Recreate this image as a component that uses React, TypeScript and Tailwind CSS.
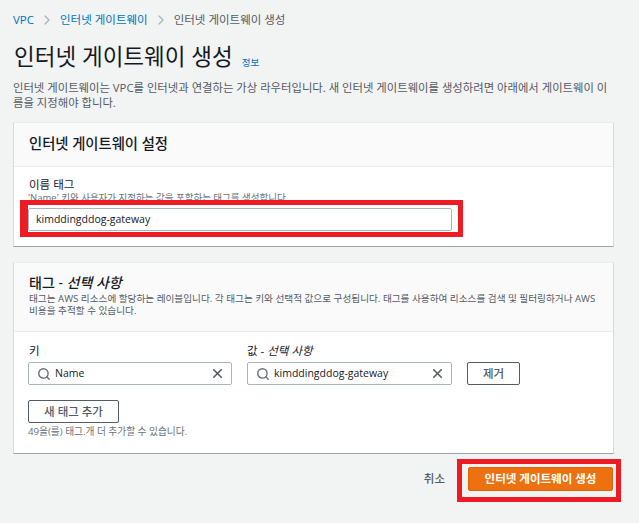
import React from "react";
import { Search, X, ChevronRight } from "lucide-react";

const font = "font-['Open_Sans','Noto_Sans_CJK_KR',sans-serif]";

function TagInput({ value, width }: { value: string; width: string }) {
  return (
    <div className={`${width} h-[23px] bg-white border border-[#aab7b8] rounded-[2px] flex items-center pl-[8px] pr-[6px]`}>
      <Search size={14} strokeWidth={2.4} className="text-[#687078] shrink-0" />
      <span className="ml-[4px] flex-1 text-[10.5px] text-[#16191f] leading-none">{value}</span>
      <X size={15} strokeWidth={2.5} className="text-[#545b64] shrink-0" />
    </div>
  );
}

export default function App() {
  return (
    <div className={`${font} relative w-[639px] h-[523px] overflow-hidden bg-[#f2f3f3] text-[#16191f]`}>
      <div className="pl-[13px] pr-[25px]">
        <nav className="flex items-center h-[20px] mt-[10px] text-[11.5px] leading-none">
          <span className="text-[#0073bb]">VPC</span>
          <ChevronRight size={16} className="text-[#aab7b8] mx-[5px]" />
          <span className="text-[#0073bb]">인터넷 게이트웨이</span>
          <ChevronRight size={16} className="text-[#aab7b8] mx-[5px]" />
          <span className="text-[#545b64]">인터넷 게이트웨이 생성</span>
        </nav>

        <div className="flex items-end h-[38px] mt-[4px]">
          <h1 className="text-[22.5px] leading-[28px] font-normal ml-[1px] mb-[1px]">인터넷 게이트웨이 생성</h1>
          <span className="text-[9.5px] text-[#0073bb] ml-[9px] mb-[2px] leading-[14px]">정보</span>
        </div>

        <p className="text-[11.35px] leading-[15px] text-[#545b64] mt-[8px] w-[601px] h-[33px] break-all">
          인터넷 게이트웨이는 VPC를 인터넷과 연결하는 가상 라우터입니다. 새 인터넷 게이트웨이를 생성하려면 아래에서 게이트웨이 이름을 지정해야 합니다.
        </p>

        <section className="mt-[9px] w-[601px] h-[125px] bg-white border-r border-l border-[#d5dbdb] border-b border-b-[#9aa5a6] border-t border-t-[#eaeded]">
          <div className="h-[44px] bg-[#fafafa] border-b border-[#eaeded] flex items-center pl-[15px]">
            <h2 className="text-[14.3px] font-medium leading-none">인터넷 게이트웨이 설정</h2>
          </div>
          <div className="pl-[14px] pt-[11px]">
            <div className="text-[11.5px] leading-[14px] pl-[1px]">이름 태그</div>
            <div className="text-[9.5px] leading-[11px] text-[#687078]">'Name' 키와 사용자가 지정하는 값을 포함하는 태그를 생성합니다.</div>
            <div className="w-[424px] h-[23px] bg-white border border-[#aab7b8] rounded-[2px] flex items-center pl-[7px] text-[10.5px] mt-[5px]">
              kimddingddog-gateway
            </div>
          </div>
        </section>

        <section className="mt-[15px] w-[601px] h-[192px] bg-white border-r border-l border-[#d5dbdb] border-b border-b-[#9aa5a6] border-t border-t-[#eaeded]">
          <div className="h-[69px] bg-[#fafafa] border-b border-[#eaeded] pl-[15px] pt-[11px]">
            <h2 className="text-[14px] font-medium leading-[18px]">
              태그 - <em className="italic">선택 사항</em>
            </h2>
            <p className="text-[9.65px] leading-[12px] text-[#545b64] mt-[1px] w-[572px]">
              태그는 AWS 리소스에 할당하는 레이블입니다. 각 태그는 키와 선택적 값으로 구성됩니다. 태그를 사용하여 리소스를 검색 및 필터링하거나 AWS 비용을 추적할 수 있습니다.
            </p>
          </div>
          <div className="pl-[14px] pt-[12px]">
            <div className="flex items-end">
              <div>
                <div className="text-[11.5px] leading-[14px] mb-[4px] pl-[1px]">키</div>
                <TagInput value="Name" width="w-[204px]" />
              </div>
              <div className="ml-[15px]">
                <div className="text-[11.5px] leading-[14px] mb-[4px]">
                  값 - <em className="italic">선택 사항</em>
                </div>
                <TagInput value="kimddingddog-gateway" width="w-[205px]" />
              </div>
              <button className="ml-[15px] w-[53px] h-[23px] bg-white border border-[#545b64] rounded-[2px] text-[11.5px] font-medium text-[#545b64] leading-none">
                제거
              </button>
            </div>
            <button className="mt-[15px] w-[91px] h-[23px] bg-white border border-[#545b64] rounded-[2px] text-[11.5px] font-medium text-[#545b64] leading-none block">
              새 태그 추가
            </button>
            <div className="text-[9.7px] leading-[12px] text-[#687078] mt-[3px]">49을(를) 태그.개 더 추가할 수 있습니다.</div>
          </div>
        </section>

        <div className="flex items-center mt-[13px] h-[24px] w-[600px]">
          <span className="ml-auto text-[11.5px] font-medium text-[#545b64]">취소</span>
          <button className="ml-[23px] w-[145px] h-[24px] bg-[#ec7211] border border-[#eb5f07] rounded-[2px] text-white text-[11.5px] font-bold leading-none">
            인터넷 게이트웨이 생성
          </button>
        </div>
      </div>

      <div className="absolute left-[20px] top-[200px] w-[443px] h-[37px] border-[#ed1c24] border-y-[5px] border-r-[5px] border-l-[8px]" />
      <div className="absolute left-[457px] top-[459px] w-[164px] h-[43px] border-[5px] border-[#ed1c24]" />
    </div>
  );
}
